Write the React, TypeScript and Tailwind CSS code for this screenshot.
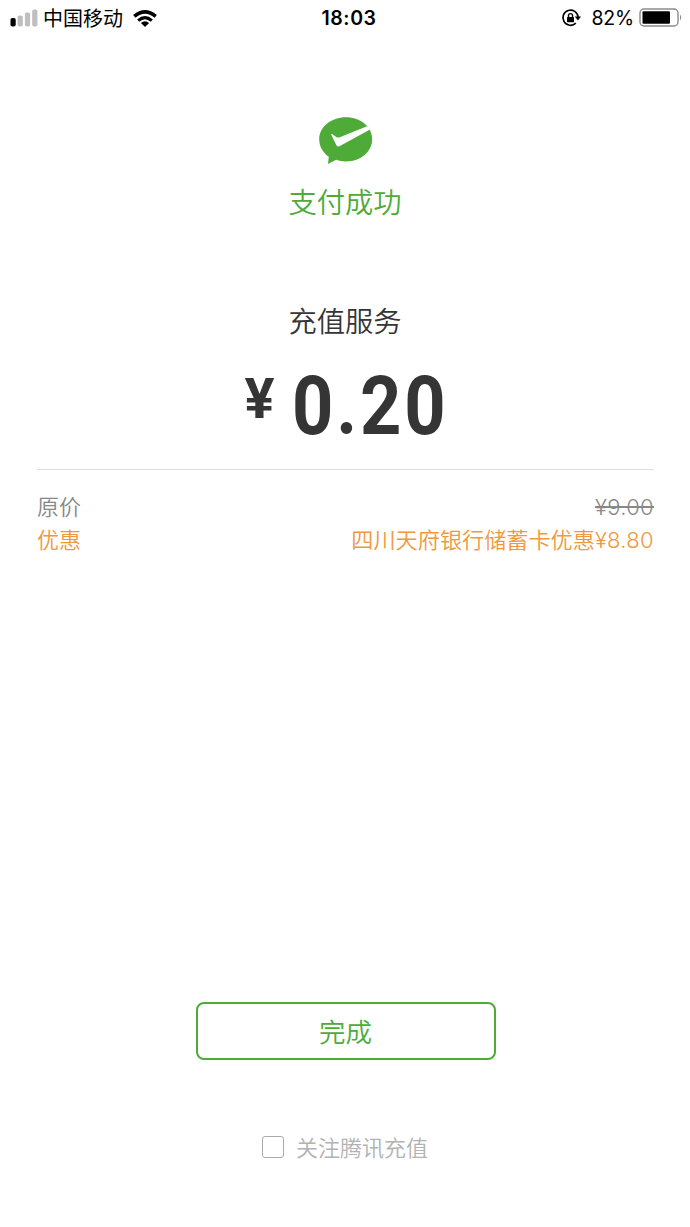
import { useState } from "react";

const latin = "font-['Inter','Noto_Sans_CJK_SC',sans-serif]";

function StatusBar() {
  return (
    <div className="grid h-9 grid-cols-3 items-center text-black">
      <div className="flex items-center pl-[10px]">
        <svg width="28" height="18" viewBox="0 0 28 18">
          <rect x="0.5" y="9" width="5.2" height="8.5" rx="1.8" fill="#000" />
          <rect x="7.6" y="6.5" width="5.2" height="11" rx="1.8" fill="#bfbfbf" />
          <rect x="14.9" y="3.5" width="5.2" height="14" rx="1.8" fill="#bfbfbf" />
          <rect x="22.2" y="0.5" width="5.2" height="17" rx="1.8" fill="#bfbfbf" />
        </svg>
        <span className="mt-0.5 ml-[5px] text-[20px] leading-none whitespace-nowrap">中国移动</span>
        <svg className="ml-[10px]" width="24" height="17" viewBox="0 0 24 17" fill="none" stroke="#000">
          <path d="M1.3 6.4Q12 -2.6 22.7 6.4" strokeWidth="3.6" />
          <path d="M5.2 10.6Q12 4.6 18.8 10.6" strokeWidth="3.2" />
          <path d="M12 17L7.9 12.9Q12 9.6 16.1 12.9Z" fill="#000" stroke="none" />
        </svg>
      </div>
      <div className="pt-0.5 pl-[8px] text-center text-[19.5px] leading-none font-semibold tracking-[0.6px]">
        18:03
      </div>
      <div className="flex items-center justify-end pr-[7px]">
        <svg width="20" height="20" viewBox="0 0 20 20" fill="none" stroke="#000" strokeWidth="1.7">
          <path d="M14.8 15.2A7.6 7.6 0 1 1 17.1 9" />
          <path d="M13.7 8.5H20L17 12.6Z" fill="#000" stroke="none" />
          <rect x="6" y="9" width="7" height="5.2" rx="0.6" fill="#000" stroke="none" />
          <path d="M7.5 9.5V7.6a2 2 0 0 1 4 0V9.5" strokeWidth="1.4" />
        </svg>
        <span className="ml-[10px] pt-0.5 text-[19.5px] leading-none tracking-[-0.2px]">82%</span>
        <svg className="ml-[5px]" width="44" height="20" viewBox="0 0 44 20">
          <rect x="1" y="1" width="38" height="17" rx="4" fill="none" stroke="#8c8c8c" strokeWidth="1.4" />
          <rect x="3.5" y="3.3" width="27.5" height="12.4" rx="1" fill="#000" />
          <path d="M41 6.5Q43.4 9.5 41 12.5Z" fill="#8c8c8c" />
        </svg>
      </div>
    </div>
  );
}

function PayLogo() {
  return (
    <svg width="54" height="48" viewBox="0 0 54 48">
      <path
        d="M27 0.3C12 0.3 0.2 10 0.2 22.3C0.2 29.5 4 35.8 9.8 39.8L9 47L17.2 42.8C20.2 43.9 23.5 44.5 27 44.5C42 44.5 53.2 34.5 53.2 22.3C53.2 10 42 0.3 27 0.3Z"
        fill="#4eab37"
      />
      <path
        d="M12 17.3Q12.6 16.6 13.4 17.2L17.6 20.2Q18.8 20.9 20.2 20.4L48 9.2L51.5 12.2L20.4 29.2Q18.6 30.2 17.4 28.2Z"
        fill="#fff"
      />
    </svg>
  );
}

export default function App() {
  const [follow, setFollow] = useState(false);

  return (
    <div className={`${latin} flex h-[1227px] w-[690px] flex-col bg-white`}>
      <StatusBar />
      <div className="mt-[81px] flex flex-col items-center pl-px">
        <PayLogo />
        <h1 className="mt-[18px] pr-px text-[28.3px] leading-10 font-[350] text-[#4eab37]">支付成功</h1>
      </div>
      <div className="mt-[79px] flex flex-col items-center text-[#353535]">
        <h2 className="pt-px text-[28.3px] leading-[39px] font-[350]">充值服务</h2>
        <div className="mt-6 flex h-20 w-[201px] items-start font-['Roboto',sans-serif]">
          <span className="mt-[5px] w-[47px] shrink-0 text-[56px] leading-[56px] font-bold">¥</span>
          <span className="shrink-0 origin-left scale-x-[0.88] text-[82px] leading-[81px] font-bold tracking-[3.2px]">
            0.20
          </span>
        </div>
      </div>
      <div className="mr-[36px] ml-[37px] mt-[23px] border-t border-[#dedede] pt-[21px] text-[22px] leading-[33px] font-[350]">
        <div className="flex justify-between text-[#888]">
          <span>原价</span>
          <span className="relative tracking-[0.3px] after:absolute after:inset-x-0 after:top-[15px] after:h-[1.5px] after:bg-[#888]">
            ¥9.00
          </span>
        </div>
        <div className="flex justify-between text-[#ef983c]">
          <span>优惠</span>
          <span>
            <span className="text-[22.15px]">四川天府银行储蓄卡优惠</span>
            <span className="tracking-[0.3px]">¥8.80</span>
          </span>
        </div>
      </div>
      <button className="mx-auto mt-auto h-[58px] w-[300px] translate-x-px rounded-lg border-2 border-[#4eab37] pt-1 pr-px text-[26.5px] font-[350] text-[#4eab37]">
        完成
      </button>
      <label className="mx-auto mt-[70px] mb-[63px] flex h-[34px] items-center text-[22px] leading-none font-[350] text-[#b2b2b2]">
        <input
          type="checkbox"
          checked={follow}
          onChange={(e) => setFollow(e.target.checked)}
          className="mr-3 size-[22px] appearance-none rounded-[3px] border border-[#aaa] checked:bg-[#4eab37]"
        />
        <span className="pt-0.5">关注腾讯充值</span>
      </label>
    </div>
  );
}
